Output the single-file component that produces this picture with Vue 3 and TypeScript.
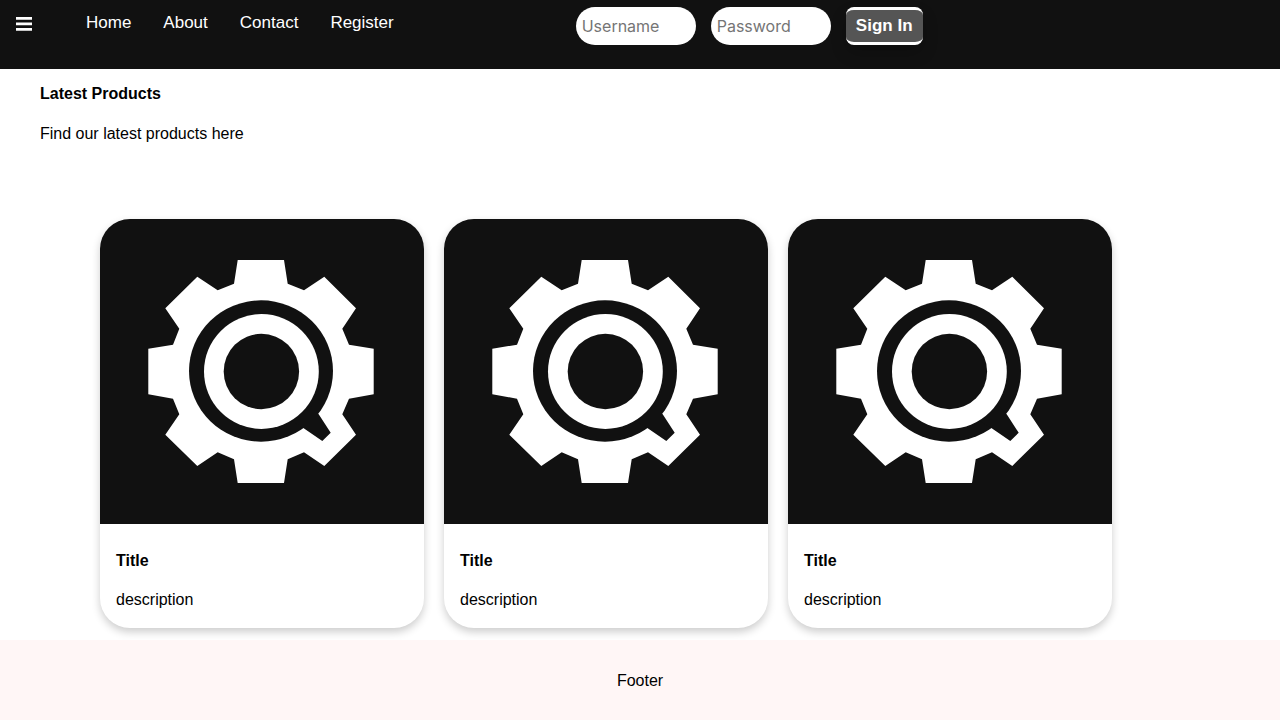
<script setup lang="ts">
interface Product {
  id: number
  title: string
  description: string
}

const links: string[] = ['Home', 'About', 'Contact', 'Register']

const products: Product[] = [1, 2, 3].map((id) => ({
  id,
  title: 'Title',
  description: 'description',
}))
</script>

<template>
  <div class="page">
    <header class="topbar">
      <button class="menu" type="button" aria-label="Menu">
        <svg width="16" height="14" viewBox="0 0 16 14" aria-hidden="true">
          <path d="M0 0h16v2.7H0zM0 5.5h16v2.7H0zM0 11h16v2.7H0z" fill="#fff" />
        </svg>
      </button>
      <nav class="links">
        <a v-for="link in links" :key="link" href="#">{{ link }}</a>
      </nav>
      <form class="login" @submit.prevent>
        <input type="text" placeholder="Username" aria-label="Username" />
        <input type="password" placeholder="Password" aria-label="Password" />
        <button class="signin" type="submit">Sign In</button>
      </form>
    </header>

    <main class="content">
      <h1>Latest Products</h1>
      <p class="intro">Find our latest products here</p>
      <section class="products">
        <article v-for="product in products" :key="product.id" class="card">
          <svg class="picture" viewBox="0 0 324 305" aria-hidden="true">
            <rect width="324" height="305" fill="#111" />
            <path
              fill="#fff"
              d="M137.7 41H184L187.7 64.7L204 71.3L224.3 57.7L256 89.3L242.3 109.7L249 125.7L273.7 129.7V175.3L249 179.7L242.3 195.3L256 215.7L224.3 247L204 233.3L187.7 240.3L184 264H137.7L134 240.3L117.7 233.3L97.3 247L65.3 215.7L79.3 195.3L73 179.7L48.3 175.3V129.7L73 125.7L79.3 109.7L65.3 89.3L97.3 57.7L117.7 71.3L134 64.7Z"
            />
            <ellipse cx="161" cy="152" rx="72" ry="70.7" fill="#111" />
            <path d="M200 175L218.7 195.3L230.7 213.7L222.3 222L203.7 209.3L180 195Z" fill="#111" />
            <circle cx="161.4" cy="152.5" r="57.4" fill="#fff" />
            <circle cx="161.4" cy="152.5" r="37.7" fill="#111" />
          </svg>
          <div class="details">
            <h2>{{ product.title }}</h2>
            <p>{{ product.description }}</p>
          </div>
        </article>
      </section>
    </main>

    <footer class="footer">Footer</footer>
  </div>
</template>

<style>
body {
  margin: 0;
  background: #fff;
}
</style>

<style scoped>
.page {
  display: flex;
  flex-direction: column;
  min-height: 100vh;
  color: #000;
  font-family: "Liberation Sans", Arial, sans-serif;
  font-size: 16px;
  line-height: 18px;
}
.topbar {
  display: flex;
  align-items: flex-start;
  padding-bottom: 24px;
  background: #111;
}
.menu {
  display: flex;
  padding: 17px 16px 14px;
  border: 0;
  background: none;
  cursor: pointer;
}
.links {
  display: flex;
  gap: 32px;
  margin-left: 38px;
  padding-top: 13px;
  font-size: 17px;
  line-height: 20px;
}
.links a {
  color: #fff;
  text-decoration: none;
}
.login {
  display: flex;
  gap: 15px;
  margin-left: 182px;
  padding-top: 7px;
}
.login input {
  box-sizing: border-box;
  width: 120px;
  height: 38px;
  padding: 0 6px;
  border: 0;
  border-radius: 20px;
  background: #fff;
  font-family: Inter, sans-serif;
  font-size: 16px;
}
.login input::placeholder {
  color: #757575;
}
.signin {
  min-width: 77px;
  height: 38px;
  padding: 0 10px;
  border: 0 solid #fff;
  border-width: 3px 0;
  border-radius: 8px;
  background: #555;
  box-shadow: 0 8px 16px rgba(0, 0, 0, 0.2);
  color: #fff;
  font: bold 17px "Liberation Sans", Arial, sans-serif;
  cursor: pointer;
}
.content {
  flex: 1;
  padding: 16px 40px 12px;
}
h1,
h2,
p {
  margin: 0;
  font-size: 16px;
}
.intro {
  margin-top: 22px;
}
.products {
  display: grid;
  grid-template-columns: repeat(3, minmax(0, 324px));
  gap: 20px;
  padding: 76px 0 0 60px;
}
.card {
  overflow: hidden;
  border-radius: 30px;
  background: #fff;
  box-shadow: 0 4px 8px rgba(0, 0, 0, 0.2);
}
.picture {
  display: block;
  width: 100%;
}
.details {
  padding: 28px 16px 19px;
}
.details p {
  margin-top: 21px;
}
.footer {
  padding: 32px 20px 30px;
  background: #fff6f6;
  text-align: center;
}
</style>
